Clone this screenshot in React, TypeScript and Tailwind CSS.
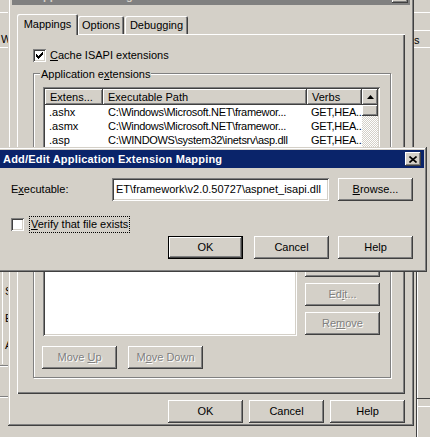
import React from 'react';

const raised =
  'shadow-[inset_-1px_-1px_#404040,inset_1px_1px_#ffffff,inset_-2px_-2px_#808080,inset_2px_2px_#d4d0c8]';
const frame =
  'shadow-[inset_-1px_-1px_#404040,inset_1px_1px_#d4d0c8,inset_-2px_-2px_#808080,inset_2px_2px_#ffffff]';
const sunken =
  'shadow-[inset_1px_1px_#808080,inset_-1px_-1px_#ffffff,inset_2px_2px_#404040,inset_-2px_-2px_#d4d0c8]';
const greyed = 'text-[#808080] [text-shadow:1px_1px_0_#ffffff]';

function Button({
  children,
  disabled = false,
  className = '',
}: {
  children: React.ReactNode;
  disabled?: boolean;
  className?: string;
}) {
  return (
    <div
      className={`flex h-[23px] w-[75px] shrink-0 items-center justify-center bg-[#d4d0c8] ${raised} ${
        disabled ? greyed : ''
      } ${className}`}
    >
      <span className="whitespace-pre">{children}</span>
    </div>
  );
}

// classic 7x7 check glyph, one 1x3 column per x
const checkCols = [5, 6, 7, 6, 5, 4, 3];

function CheckBox({ checked = false }: { checked?: boolean }) {
  return (
    <div className={`relative h-[13px] w-[13px] shrink-0 bg-white ${sunken}`}>
      {checked && (
        <svg className="absolute left-0 top-0" width="13" height="13" viewBox="0 0 13 13">
          {checkCols.map((y, i) => (
            <rect key={i} x={3 + i} y={y} width="1" height="3" fill="#000" />
          ))}
        </svg>
      )}
    </div>
  );
}

function CloseBox() {
  return (
    <div className={`flex h-[14px] w-[16px] items-center justify-center bg-[#d4d0c8] ${raised}`}>
      <svg width="8" height="7" viewBox="0 0 8 7">
        <path d="M0.5 0.5 7.5 6.5 M7.5 0.5 0.5 6.5" stroke="#000" strokeWidth="1.6" fill="none" />
      </svg>
    </div>
  );
}

const rows = [
  ['.ashx', 'C:\\Windows\\Microsoft.NET\\framewor...', 'GET,HEA..'],
  ['.asmx', 'C:\\Windows\\Microsoft.NET\\framewor...', 'GET,HEA..'],
  ['.asp', 'C:\\WINDOWS\\system32\\inetsrv\\asp.dll', 'GET,HEA..'],
];

function ExtensionList() {
  return (
    <div className={`flex h-[120px] w-[337px] bg-white p-[2px] ${sunken}`}>
      <div className="flex w-[317px] flex-col overflow-hidden">
        <div className="flex h-[16px] shrink-0">
          <div className={`flex w-[58px] items-center bg-[#d4d0c8] pl-[5px] ${raised}`}>Extens...</div>
          <div className={`flex w-[204px] items-center bg-[#d4d0c8] pl-[5px] ${raised}`}>Executable Path</div>
          <div className={`flex w-[55px] items-center bg-[#d4d0c8] pl-[5px] ${raised}`}>Verbs</div>
        </div>
        {rows.map((r) => (
          <div key={r[0]} className="flex h-[14px] shrink-0 items-center whitespace-nowrap">
            <div className="w-[58px] overflow-hidden pl-[4px]">{r[0]}</div>
            <div className="w-[204px] overflow-hidden pl-[5px] tracking-[-0.3px]">{r[1]}</div>
            <div className="w-[55px] overflow-hidden pl-[4px] tracking-[-0.3px]">{r[2]}</div>
          </div>
        ))}
      </div>
      <div className="flex w-[16px] flex-col">
        <div className={`flex h-[16px] shrink-0 items-center justify-center bg-[#d4d0c8] ${raised}`}>
          <svg width="7" height="4" viewBox="0 0 7 4">
            <path d="M3.5 0 7 4 0 4Z" fill="#000" />
          </svg>
        </div>
        <div className={`h-[11px] shrink-0 bg-[#d4d0c8] ${raised}`} />
        <div className="flex-1 bg-[image:repeating-conic-gradient(#d4d0c8_0_25%,#ffffff_0_50%)] bg-[length:2px_2px]" />
      </div>
    </div>
  );
}

function MainWindow() {
  return (
    <div className={`absolute left-[8px] top-[-17px] flex h-[443px] w-[406px] flex-col bg-[#d4d0c8] p-[4px] ${frame}`}>
      <div className="flex h-[18px] shrink-0 items-center bg-[#808080] pl-[23px] pr-[2px]">
        <span className="flex-1 font-bold text-[#d4d0c8]">Application Configuration</span>
        <CloseBox />
      </div>

      <div className="mt-[9px] flex flex-col px-[5px]">
        <div className="flex h-[20px] items-end">
          <div className="relative z-10 mb-[-1px] flex h-[21px] w-[61px] items-center justify-center rounded-t-[2px] bg-[#d4d0c8] shadow-[inset_1px_1px_#ffffff,inset_-1px_0_#404040,inset_-2px_0_#808080]">
            Mappings
          </div>
          <div className="flex h-[18px] w-[46px] items-center justify-center rounded-t-[2px] bg-[#d4d0c8] shadow-[inset_1px_1px_#ffffff,inset_-1px_0_#404040,inset_-2px_0_#808080]">
            Options
          </div>
          <div className="ml-[1px] flex h-[18px] w-[63px] items-center justify-center rounded-t-[2px] bg-[#d4d0c8] shadow-[inset_1px_1px_#ffffff,inset_-1px_0_#404040,inset_-2px_0_#808080]">
            Debugging
          </div>
        </div>

        <div className="flex h-[360px] flex-col pl-[16px] pt-[15px] shadow-[inset_1px_1px_#ffffff,inset_-1px_-1px_#404040,inset_-2px_-2px_#808080]">
          <div className="flex items-center gap-[4px]">
            <CheckBox checked />
            <span>
              <u>C</u>ache ISAPI extensions
            </span>
          </div>

          <div className="relative mt-[11px] flex h-[305px] w-[358px] flex-col border border-[#808080] pb-[8px] pl-[9px] pt-[13px] shadow-[1px_1px_0_#ffffff,inset_1px_1px_0_#ffffff]">
            <span className="absolute left-[6px] top-[-5px] bg-[#d4d0c8] px-[1px]">
              Application e<u>x</u>tensions
            </span>
            <ExtensionList />
            <div className="mt-[7px] flex h-[122px] items-end">
              <div className={`h-[122px] w-[254px] bg-white ${sunken}`} />
              <div className="mb-[1px] ml-[8px] flex flex-col gap-[6px]">
                <Button disabled>Insert...</Button>
                <Button disabled>
                  Ed<u>i</u>t...
                </Button>
                <Button disabled>
                  Re<u>m</u>ove
                </Button>
              </div>
            </div>
            <div className="ml-[-1px] mt-[10px] flex gap-[11px]">
              <Button disabled>
                {'Move '}
                <u>U</u>p
              </Button>
              <Button disabled>
                M<u>o</u>ve Down
              </Button>
            </div>
          </div>
        </div>

        <div className="mt-[6px] flex justify-end">
          <Button>OK</Button>
          <Button className="ml-[6px]">Cancel</Button>
          <Button className="ml-[6px]">Help</Button>
        </div>
      </div>
    </div>
  );
}

function MappingDialog() {
  return (
    <div className={`absolute left-[-3px] top-[147px] flex h-[125px] w-[430px] flex-col bg-[#d4d0c8] p-[3px] ${frame}`}>
      <div className="flex h-[18px] shrink-0 items-center bg-[#0a246a] pl-[3px] pr-[3px]">
        <span className="flex-1 font-bold tracking-[0.2px] text-white">Add/Edit Application Extension Mapping</span>
        <CloseBox />
      </div>

      <div className="flex flex-col pl-[11px] pr-[11px]">
        <div className="mt-[10px] flex h-[23px] items-center">
          <span className="w-[101px]">
            E<u>x</u>ecutable:
          </span>
          <div className={`flex h-[23px] w-[217px] items-center overflow-hidden whitespace-nowrap bg-white pl-[4px] ${sunken}`}>
            ET\framework\v2.0.50727\aspnet_isapi.dll
          </div>
          <Button className="ml-[9px]">
            <u>B</u>rowse...
          </Button>
        </div>

        <div className="mt-[15px] flex h-[16px] items-center">
          <CheckBox />
          <span className="ml-[5px] border border-dotted border-black px-[1px] py-[2px]">
            <u>V</u>erify that file exists
          </span>
        </div>

        <div className="mt-[4px] flex justify-end">
          <div className="h-[23px] w-[75px] border border-black">
            <div className={`flex h-full w-full items-center justify-center bg-[#d4d0c8] ${raised}`}>OK</div>
          </div>
          <Button className="ml-[11px]">Cancel</Button>
          <Button className="ml-[9px]">Help</Button>
        </div>
      </div>
    </div>
  );
}

export default function App() {
  return (
    <div className="relative h-[437px] w-[430px] overflow-hidden bg-[#d4d0c8] font-['Liberation_Sans',Arial,sans-serif] text-[11px] leading-none text-black">
      {/* window behind, left */}
      <div className="absolute left-0 top-0 h-full w-[10px]">
        <div className="absolute left-0 top-[12px] h-px w-full bg-white" />
        <div className="absolute left-0 top-[47px] h-px w-full bg-white" />
        <span className="absolute left-[1px] top-[34px]">W</span>
        <div className="absolute left-[2px] top-[272px] h-[92px] w-px bg-white" />
        <span className="absolute left-[5px] top-[286px]">S</span>
        <span className="absolute left-[5px] top-[313px]">E</span>
        <span className="absolute left-[5px] top-[340px]">A</span>
        <div className="absolute left-0 top-[365px] h-px w-full bg-[#808080]" />
        <div className="absolute left-0 top-[366px] h-px w-full bg-white" />
        <div className="absolute left-0 top-[396px] h-px w-full bg-[#808080]" />
        <div className="absolute left-0 top-[397px] h-px w-full bg-white" />
      </div>

      {/* window behind, right */}
      <div className="absolute right-0 top-0 h-full w-[18px]">
        <div className="absolute left-0 top-[12px] h-px w-full bg-white" />
        <div className="absolute left-0 top-[30px] h-px w-full bg-white" />
        <div className="absolute left-0 top-[47px] h-px w-full bg-white" />
        <span className="absolute left-[2px] top-[35px]">s</span>
        <div className="absolute left-[4px] top-[272px] h-[165px] w-px bg-[#404040]" />
        <div className="absolute left-[5px] top-[272px] h-[165px] w-px bg-white" />
        <div className="absolute left-[5px] top-[398px] h-px w-full bg-[#404040]" />
        <div className="absolute left-[5px] top-[406px] h-px w-full bg-white" />
      </div>

      <MainWindow />
      <MappingDialog />
    </div>
  );
}
